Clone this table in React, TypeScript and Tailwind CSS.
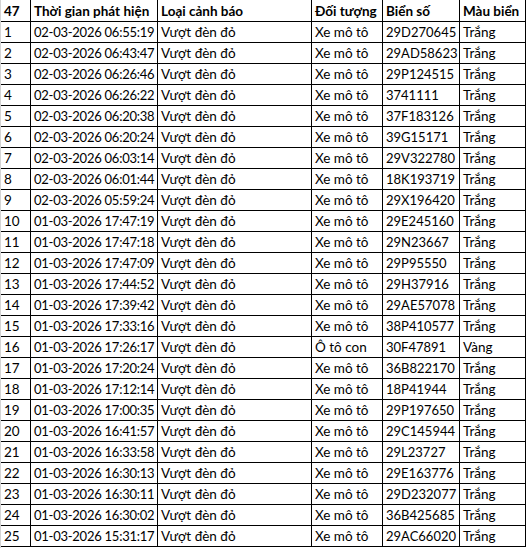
const rows: [string, string, string, string, string][] = [
  ["02-03-2026 06:55:19", "Vượt đèn đỏ", "Xe mô tô", "29D270645", "Trắng"],
  ["02-03-2026 06:43:47", "Vượt đèn đỏ", "Xe mô tô", "29AD58623", "Trắng"],
  ["02-03-2026 06:26:46", "Vượt đèn đỏ", "Xe mô tô", "29P124515", "Trắng"],
  ["02-03-2026 06:26:22", "Vượt đèn đỏ", "Xe mô tô", "3741111", "Trắng"],
  ["02-03-2026 06:20:38", "Vượt đèn đỏ", "Xe mô tô", "37F183126", "Trắng"],
  ["02-03-2026 06:20:24", "Vượt đèn đỏ", "Xe mô tô", "39G15171", "Trắng"],
  ["02-03-2026 06:03:14", "Vượt đèn đỏ", "Xe mô tô", "29V322780", "Trắng"],
  ["02-03-2026 06:01:44", "Vượt đèn đỏ", "Xe mô tô", "18K193719", "Trắng"],
  ["02-03-2026 05:59:24", "Vượt đèn đỏ", "Xe mô tô", "29X196420", "Trắng"],
  ["01-03-2026 17:47:19", "Vượt đèn đỏ", "Xe mô tô", "29E245160", "Trắng"],
  ["01-03-2026 17:47:18", "Vượt đèn đỏ", "Xe mô tô", "29N23667", "Trắng"],
  ["01-03-2026 17:47:09", "Vượt đèn đỏ", "Xe mô tô", "29P95550", "Trắng"],
  ["01-03-2026 17:44:52", "Vượt đèn đỏ", "Xe mô tô", "29H37916", "Trắng"],
  ["01-03-2026 17:39:42", "Vượt đèn đỏ", "Xe mô tô", "29AE57078", "Trắng"],
  ["01-03-2026 17:33:16", "Vượt đèn đỏ", "Xe mô tô", "38P410577", "Trắng"],
  ["01-03-2026 17:26:17", "Vượt đèn đỏ", "Ô tô con", "30F47891", "Vàng"],
  ["01-03-2026 17:20:24", "Vượt đèn đỏ", "Xe mô tô", "36B822170", "Trắng"],
  ["01-03-2026 17:12:14", "Vượt đèn đỏ", "Xe mô tô", "18P41944", "Trắng"],
  ["01-03-2026 17:00:35", "Vượt đèn đỏ", "Xe mô tô", "29P197650", "Trắng"],
  ["01-03-2026 16:41:57", "Vượt đèn đỏ", "Xe mô tô", "29C145944", "Trắng"],
  ["01-03-2026 16:33:58", "Vượt đèn đỏ", "Xe mô tô", "29L23727", "Trắng"],
  ["01-03-2026 16:30:13", "Vượt đèn đỏ", "Xe mô tô", "29E163776", "Trắng"],
  ["01-03-2026 16:30:11", "Vượt đèn đỏ", "Xe mô tô", "29D232077", "Trắng"],
  ["01-03-2026 16:30:02", "Vượt đèn đỏ", "Xe mô tô", "36B425685", "Trắng"],
  ["01-03-2026 15:31:17", "Vượt đèn đỏ", "Xe mô tô", "29AC66020", "Trắng"],
];

const headers = ["47", "Thời gian phát hiện", "Loại cảnh báo", "Đối tượng", "Biển số", "Màu biển"];

const cell = "border-r border-b border-black pl-[3px] whitespace-nowrap overflow-hidden";

export default function App() {
  return (
    <div className="w-[528px] h-[548px] overflow-hidden bg-white border-l border-[#d4d4d4] text-black font-['Lato','Open_Sans',sans-serif] text-[13.5px] leading-[20px]">
      <div className="grid grid-cols-[30px_127px_154px_71px_77px_66px]">
        {headers.map((h) => (
          <div key={h} className={`${cell} h-[22px] pt-[1px] font-bold`}>
            {h}
          </div>
        ))}
        {rows.map((r, i) => (
          <div key={i} className="contents">
            <div className={`${cell} h-[21px]`}>{i + 1}</div>
            {r.map((v, j) => (
              <div
                key={j}
                className={`${cell} h-[21px] ${j === 0 ? "text-[13px] tracking-[-0.25px] pl-[2px]" : ""} ${j === 3 ? "text-[13px]" : ""}`}
              >
                {v}
              </div>
            ))}
          </div>
        ))}
      </div>
    </div>
  );
}
